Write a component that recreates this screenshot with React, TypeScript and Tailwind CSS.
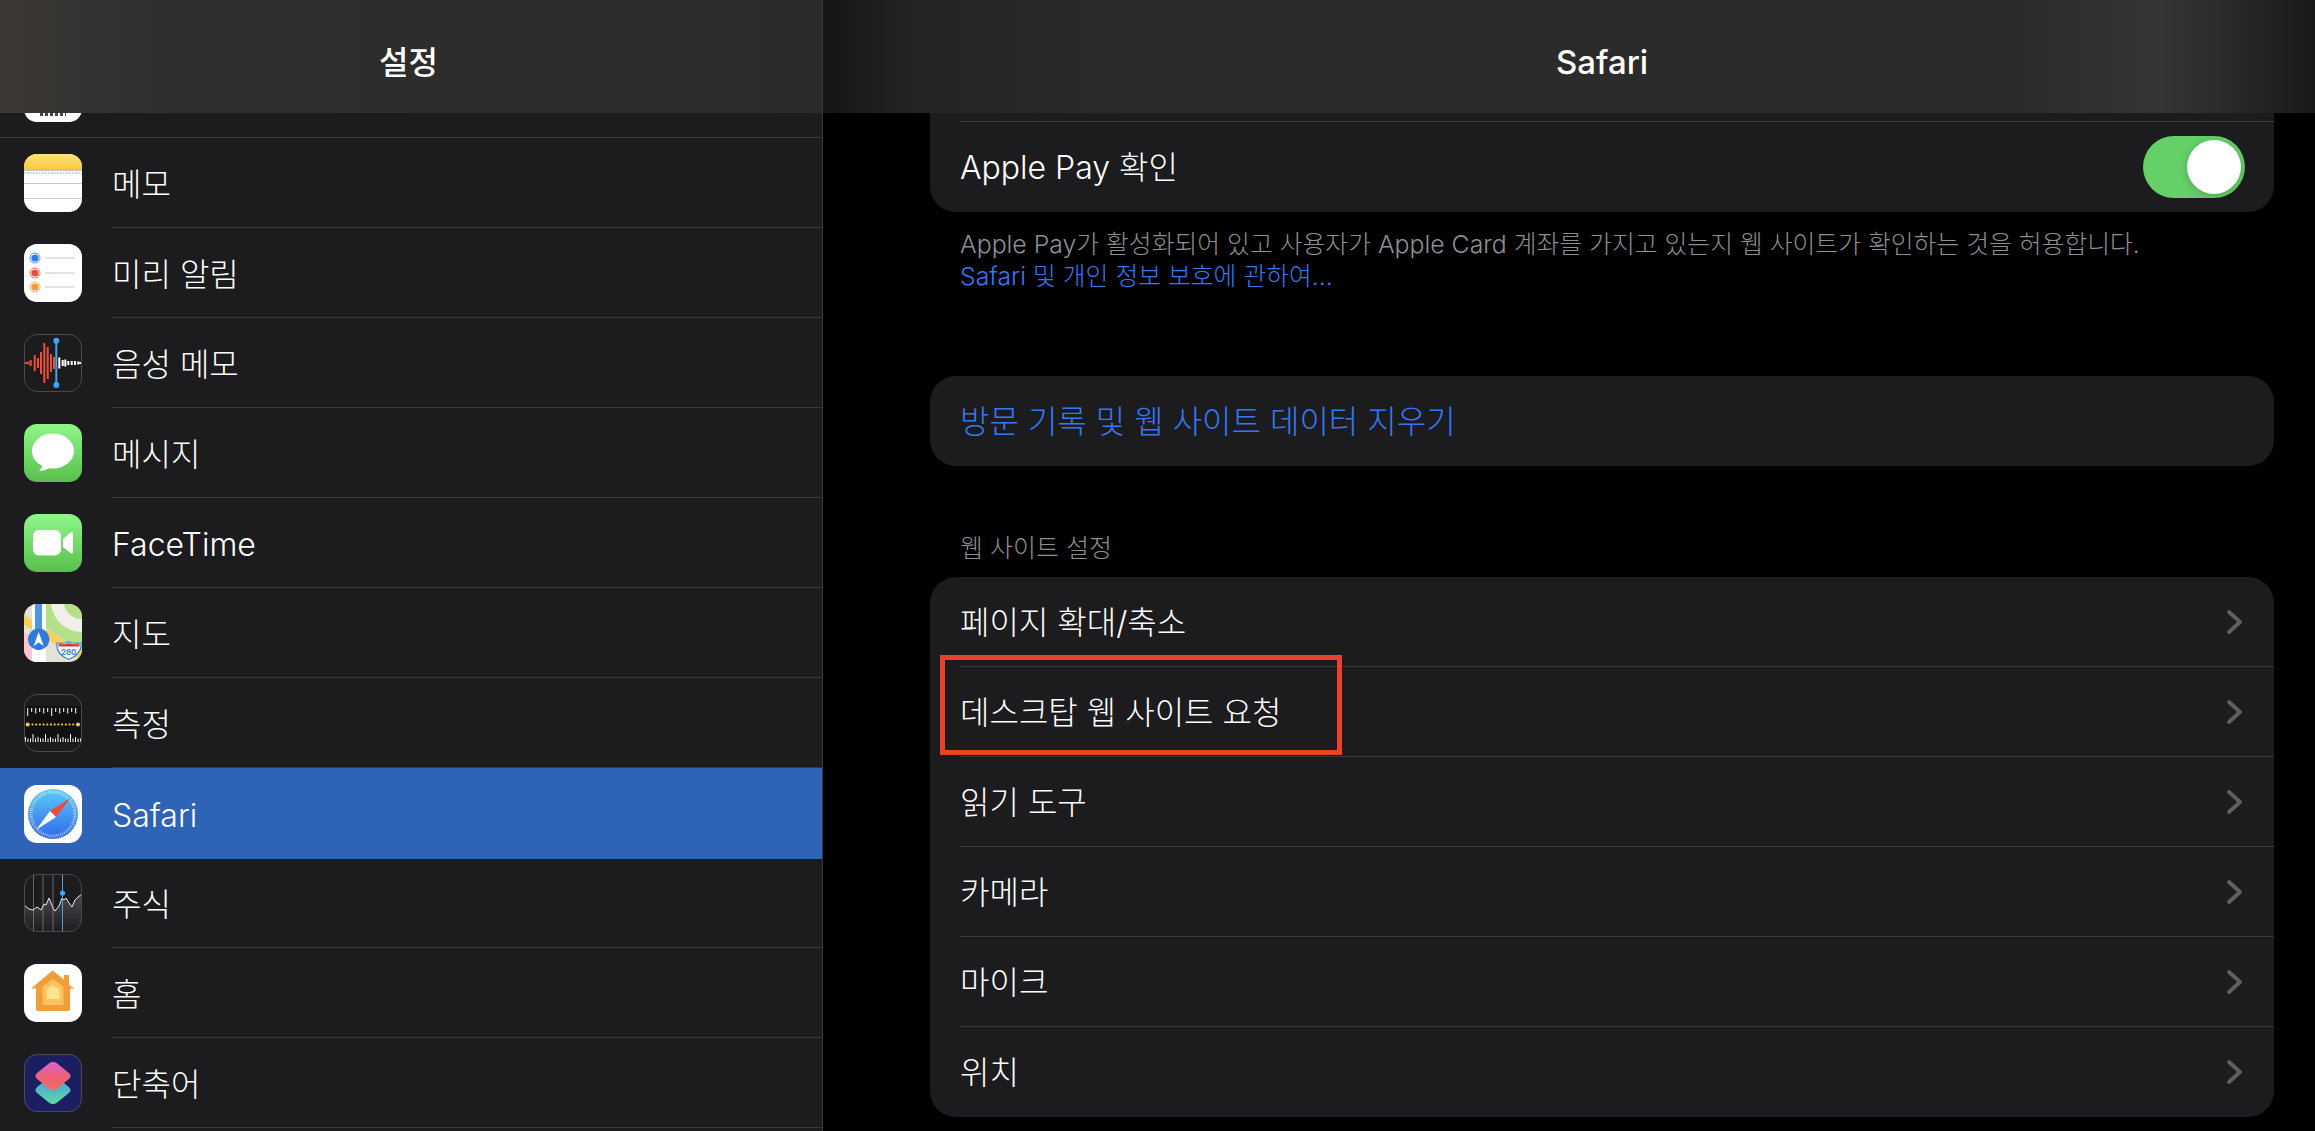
const Notes = () => (
    <svg viewBox="0 0 58 58" className="w-full h-full">
        <defs>
            <linearGradient id="notesTop" x1="0" y1="0" x2="0" y2="1">
                <stop offset="0" stopColor="#fbe17a" />
                <stop offset="1" stopColor="#f6cb3f" />
            </linearGradient>
        </defs>
        <rect width="58" height="58" fill="#fff" />
        <rect width="58" height="15" fill="url(#notesTop)" />
        <rect y="15" width="58" height="2" fill="#c4c4c4" />
        <line x1="0" y1="19" x2="58" y2="19" stroke="#c9c9c9" strokeWidth="2" strokeDasharray="1.5 1.5" />
        <rect y="29" width="58" height="1" fill="#c8c8c8" />
        <rect y="44" width="58" height="1" fill="#c8c8c8" />
    </svg>
)

const Reminders = () => (
    <svg viewBox="0 0 58 58" className="w-full h-full">
        <rect width="58" height="58" fill="#fff" />
        {[[14, '#3478f6'], [29, '#ea4d3d'], [43, '#f19a37']].map(([y, c]) => (
            <g key={y as number}>
                <circle cx="11" cy={y as number} r="5" fill="none" stroke={c as string} strokeWidth="0.8" />
                <circle cx="11" cy={y as number} r="3.6" fill={c as string} />
                <line x1="21" x2="51" y1={y as number} y2={y as number} stroke="#c8c8c8" />
            </g>
        ))}
    </svg>
)

const voiceRed = [[2, 1], [4.3, 1.5], [6.7, 3], [10.7, 8], [14, 5], [17, 11], [20.3, 20], [23.7, 16], [27, 9], [30, 6]]
const voiceWhite = [[35.3, 5.5], [38.7, 3], [41.3, 3.5], [44.3, 2], [47.7, 2], [51, 2], [54.3, 1.5], [56.3, 1]]
const VoiceMemos = () => (
    <svg viewBox="0 0 58 58" className="w-full h-full">
        <rect width="58" height="58" fill="#1c1c1e" />
        {voiceRed.map(([x, h]) => (
            <rect key={x} x={x - 1} y={29 - h} width="2" height={h * 2} fill="#f04e3a" />
        ))}
        {voiceWhite.map(([x, h]) => (
            <rect key={x} x={x - 1} y={29 - h} width="2" height={h * 2} fill="#fff" />
        ))}
        <line x1="32.300" x2="32.300" y1="6" y2="52" stroke="#3ea4f4" strokeWidth="2" />
        <circle cx="32.300" cy="6.700" r="3" fill="#3ea4f4" />
        <circle cx="32.300" cy="51" r="3" fill="#3ea4f4" />
    </svg>
)

const Messages = () => (
    <svg viewBox="0 0 58 58" className="w-full h-full">
        <defs>
            <linearGradient id="greenA" x1="0" y1="0" x2="0" y2="1">
                <stop offset="0" stopColor="#8ff788" />
                <stop offset="1" stopColor="#58bf4c" />
            </linearGradient>
        </defs>
        <rect width="58" height="58" fill="url(#greenA)" />
        <ellipse cx="29" cy="27" rx="21" ry="17.5" fill="#fff" />
        <path d="M19 38 C19 42 17 45 15 47 C20 47 24 45 27 43 Z" fill="#fff" />
    </svg>
)

const FaceTime = () => (
    <svg viewBox="0 0 58 58" className="w-full h-full">
        <defs>
            <linearGradient id="greenB" x1="0" y1="0" x2="0" y2="1">
                <stop offset="0" stopColor="#8ff788" />
                <stop offset="1" stopColor="#58bf4c" />
            </linearGradient>
        </defs>
        <rect width="58" height="58" fill="url(#greenB)" />
        <rect x="9" y="16" width="28" height="25.5" rx="6" fill="#fff" />
        <path d="M39 25 L46.500 18.500 Q49 17 49 20 V37.500 Q49 40.500 46.500 39 L39 33 Z" fill="#fff" />
    </svg>
)

const Maps = () => (
    <svg viewBox="0 0 58 58" className="w-full h-full">
        <rect width="58" height="58" fill="#e4e2d8" />
        <path d="M22 0 H58 V47 L22 24 Z" fill="#b5e08a" />
        <path d="M27 0 A31 31 0 0 0 58 28 V15 A18 18 0 0 1 40 0 Z" fill="#f1efe9" />
        <path d="M0 28 L8 33 V58 H0 Z" fill="#f6c5d0" />
        <path d="M0 11 L58 47 V57 L0 21 Z" fill="#f7cf5e" />
        <rect x="8" y="0" width="14" height="58" fill="#fff" />
        <rect x="11" y="0" width="7" height="34" fill="#4e97e0" />
        <circle cx="14.700" cy="35.300" r="10.700" fill="#2f7bdc" />
        <path d="M14.700 28 L19.700 42 L14.700 38.500 L9.700 42 Z" fill="#fff" />
        <path d="M33 39 Q38 40 44.700 37.700 Q51 40 57 39 C58 47 53 52 44.700 55.500 C36 52 32 47 33 39 Z" fill="#fff" stroke="#3f86d9" strokeWidth="1.200" />
        <path d="M34.500 40 Q39 41 44.700 39 Q50 41 55.500 40 L55.500 42.500 H34.500 Z" fill="#cf3b33" />
        <text x="44.700" y="50.500" textAnchor="middle" fontSize="8" fontWeight="700" fill="#3f86d9" fontFamily="Inter, sans-serif">280</text>
    </svg>
)

const measureTop = [8, 4, 5.500, 4, 5.500, 4, 8, 4, 5.500, 4, 5.500, 4, 5.500]
const Measure = () => (
    <svg viewBox="0 0 58 58" className="w-full h-full">
        <rect width="58" height="58" fill="#1c1c1e" />
        <rect y="12" width="58" height="36" fill="#111" />
        {measureTop.map((h, i) => (
            <rect key={i} x={3.200 + i * 4} y="14" width="1" height={h} fill="#fff" />
        ))}
        {Array.from({ length: 23 }).map((_, i) => (
            <rect key={i} x={1 + i * 2.5} y={i % 5 === 3 ? 40 : i % 5 === 0 ? 43 : 44.500} width="1" height={i % 5 === 3 ? 8 : i % 5 === 0 ? 5 : 3.500} fill="#fff" />
        ))}
        {Array.from({ length: 12 }).map((_, i) => (
            <rect key={i} x={7.500 + i * 3.700} y="29.500" width="2" height="2" rx="0.800" fill="#f7cc46" />
        ))}
        <circle cx="3.700" cy="30.500" r="2" fill="#f7cc46" />
        <circle cx="54" cy="30.500" r="2" fill="#f7cc46" />
    </svg>
)

const Safari = () => (
    <svg viewBox="0 0 58 58" className="w-full h-full">
        <defs>
            <linearGradient id="safariBlue" x1="0" y1="0" x2="0" y2="1">
                <stop offset="0" stopColor="#5ccbfa" />
                <stop offset="1" stopColor="#3068e8" />
            </linearGradient>
        </defs>
        <rect width="58" height="58" fill="#fff" />
        <circle cx="29" cy="29" r="25" fill="url(#safariBlue)" />
        <circle cx="29" cy="29" r="22" fill="none" stroke="#fff" strokeOpacity="0.75" strokeWidth="3" strokeDasharray="0.7 1.3" />
        <path d="M46.500 13 L26 26 L32 32 Z" fill="#ee4b36" />
        <path d="M12 45 L26 26 L32 32 Z" fill="#fff" />
    </svg>
)

const Stocks = () => (
    <svg viewBox="0 0 58 58" className="w-full h-full">
        <defs>
            <linearGradient id="stockFill" x1="0" y1="0" x2="0" y2="1">
                <stop offset="0" stopColor="#4a4a4c" />
                <stop offset="1" stopColor="#1c1c1e" />
            </linearGradient>
        </defs>
        <rect width="58" height="58" fill="#1c1c1e" />
        <path d="M0 31 L5 35 L9 36 L13 33 L17 36 L20 30 L22 31 L25 24 L29 34 L31 37 L35 32 L38 24 L40 26 L42 24 L45 29 L48 33 L51 26 L54 23 L58 20 L58 58 L0 58 Z" fill="url(#stockFill)" />
        {[9.500, 19, 29].map((x) => (
            <line key={x} x1={x} x2={x} y1="0" y2="58" stroke="#8a8a8c" strokeWidth="0.7" />
        ))}
        <path d="M0 31 L5 35 L9 36 L13 33 L17 36 L20 30 L22 31 L25 24 L29 34 L31 37 L35 32 L38 24 L40 26 L42 24 L45 29 L48 33 L51 26 L54 23 L58 20" fill="none" stroke="#e8e8e8" strokeWidth="1" />
        <line x1="38.500" x2="38.500" y1="0" y2="58" stroke="#3ea4f4" strokeWidth="1" />
        <circle cx="38.500" cy="19" r="2.600" fill="#3ea4f4" />
    </svg>
)

const Home = () => (
    <svg viewBox="0 0 58 58" className="w-full h-full">
        <rect width="58" height="58" fill="#fff" />
        <path d="M40 11 H45 V21 L51 24.500 H46 V45 Q46 47 44 47 H14 Q12 47 12 45 V24.500 H7 L28.700 6.500 L40 15.500 Z" fill="#f19d38" />
        <path d="M28.700 15 L39.500 22.500 V41 H18.500 V22.500 Z" fill="#fbc25f" />
        <path d="M28.700 21 L35.500 25.500 V35 H22.500 V25.500 Z" fill="#fde58e" />
    </svg>
)

const Shortcuts = () => (
    <svg viewBox="0 0 58 58" className="w-full h-full">
        <defs>
            <linearGradient id="shortA" x1="0" y1="0" x2="1" y2="1">
                <stop offset="0" stopColor="#d766d8" />
                <stop offset="0.55" stopColor="#ee6072" />
                <stop offset="1" stopColor="#f0705a" />
            </linearGradient>
            <linearGradient id="shortB" x1="0" y1="0" x2="1" y2="1">
                <stop offset="0" stopColor="#4a8fe8" />
                <stop offset="1" stopColor="#5ee0a0" />
            </linearGradient>
        </defs>
        <rect width="58" height="58" fill="#1b1f61" />
        <g transform="translate(29 36) scale(1 0.8) rotate(45)">
            <rect x="-14" y="-14" width="28" height="28" rx="5.500" fill="url(#shortB)" />
        </g>
        <g transform="translate(29 22) scale(1 0.8) rotate(45)">
            <rect x="-14" y="-14" width="28" height="28" rx="5.500" fill="url(#shortA)" />
        </g>
    </svg>
)

const Calendar = () => (
    <div className="w-[58px] h-[58px] -mt-[49px] ml-6 rounded-[13px] bg-white shrink-0 flex items-end justify-center pb-[6px]">
        <div className="w-[26px] h-[3px] bg-[repeating-linear-gradient(90deg,#444_0,#444_3px,#fff_3px,#fff_5px)]" />
    </div>
)

const rows = [
    { label: '메모', icon: <Notes />, ring: false },
    { label: '미리 알림', icon: <Reminders />, ring: false },
    { label: '음성 메모', icon: <VoiceMemos />, ring: true },
    { label: '메시지', icon: <Messages />, ring: false },
    { label: 'FaceTime', icon: <FaceTime />, ring: false },
    { label: '지도', icon: <Maps />, ring: false },
    { label: '측정', icon: <Measure />, ring: true },
    { label: 'Safari', icon: <Safari />, ring: false, active: true },
    { label: '주식', icon: <Stocks />, ring: true },
    { label: '홈', icon: <Home />, ring: false },
    { label: '단축어', icon: <Shortcuts />, ring: true },
]

const settings = ['페이지 확대/축소', '데스크탑 웹 사이트 요청', '읽기 도구', '카메라', '마이크', '위치']

const Chevron = () => (
    <svg viewBox="0 0 18 28" className="w-[18px] h-[28px] -mt-[2px] shrink-0" fill="none" stroke="#5f5f63" strokeWidth="4" strokeLinecap="round" strokeLinejoin="round">
        <path d="M4 4 L15 14 L4 24" />
    </svg>
)

export default function App() {
    return (
        <div className="flex w-[2315px] h-[1131px] overflow-hidden bg-black text-white font-['Inter','Noto_Sans_CJK_KR',sans-serif]">
            <aside className="w-[823px] shrink-0 h-full flex flex-col bg-[#1c1c1e] border-r border-[#38383a] overflow-hidden">
                <header className="h-[113px] shrink-0 flex items-center justify-center pt-[12px] pr-[5px] text-[32px] font-medium bg-[linear-gradient(90deg,#3b3835_0,#2f2e2d_180px,#2b2b2b_100%)] relative z-10">
                    설정
                </header>
                <div className="h-[25px] shrink-0 border-b border-[#38383a] overflow-hidden flex">
                    <Calendar />
                </div>
                {rows.map((row) => (
                    <div key={row.label} className={row.active ? 'h-[91px] -mb-px shrink-0 flex items-center pl-6 bg-[#2f63b5] relative' : 'h-[90px] shrink-0 flex items-center pl-6'}>
                        <div className={row.ring ? 'w-[58px] h-[58px] shrink-0 rounded-[13px] overflow-hidden outline outline-1 -outline-offset-1 outline-[#4a4a4c]' : 'w-[58px] h-[58px] shrink-0 rounded-[13px] overflow-hidden'}>
                            {row.icon}
                        </div>
                        <div className={row.active ? 'flex-1 h-full ml-[30px] pt-[4px] flex items-center text-[32px] font-light' : 'flex-1 h-full ml-[30px] pt-[4px] flex items-center text-[32px] font-light border-b border-[#38383a]'}>
                            {row.label}
                        </div>
                    </div>
                ))}
            </aside>

            <main className="flex-1 min-w-0 h-full flex flex-col">
                <header className="h-[113px] shrink-0 flex items-center justify-center pt-[12px] pl-[66px] text-[33px] font-medium bg-[linear-gradient(90deg,#151515_0,#242424_90px,#2b2b2b_300px,#2b2b2b_1200px,#353535_1330px,#2e2e2e_1380px,#191919_1492px)]">
                    Safari
                </header>
                <div className="flex-1 pl-[107px] pr-[41px]">
                    <section className="bg-[#1c1c1e] rounded-b-[26px]">
                        <div className="h-2" />
                        <div className="ml-[30px] h-[91px] pt-[2px] flex items-center justify-between border-t border-[#38383a] pr-[29px]">
                            <span className="text-[32px] font-light">Apple Pay 확인</span>
                            <div className="w-[102px] h-[62px] -mt-[2px] rounded-full bg-[#65cf68] flex items-center justify-end pr-1">
                                <div className="w-[54px] h-[54px] rounded-full bg-white shadow-[0_2px_8px_rgba(0,0,0,0.2)]" />
                            </div>
                        </div>
                    </section>
                    <div className="pl-[30px] pt-[16px] text-[24.8px] leading-[32px] font-light text-[#8e8e93]">
                        <p>Apple Pay가 활성화되어 있고 사용자가 Apple Card 계좌를 가지고 있는지 웹 사이트가 확인하는 것을 허용합니다.</p>
                        <p className="text-[#3478f6]">Safari 및 개인 정보 보호에 관하여...</p>
                    </div>
                    <div className="mt-[84px] h-[90px] pt-[2px] rounded-[26px] bg-[#1c1c1e] flex items-center pl-[30px] text-[32px] font-light text-[#3478f6]">
                        방문 기록 및 웹 사이트 데이터 지우기
                    </div>
                    <h2 className="mt-[64px] pl-[30px] text-[25px] leading-[36px] font-light text-[#8e8e93]">웹 사이트 설정</h2>
                    <section className="mt-[11px] rounded-[26px] bg-[#1c1c1e]">
                        {settings.map((label, i) => (
                            <div key={label} className="relative ml-[30px] h-[90px] pt-[2px] flex items-center justify-between pr-[31px] border-b border-[#38383a] last:border-b-0 text-[32px] font-light">
                                <span>{label}</span>
                                <Chevron />
                                {i === 1 && (
                                    <div className="absolute left-[-20px] top-[-12px] w-[402px] h-[100px] border-[5px] border-[#e8432a]" />
                                )}
                            </div>
                        ))}
                    </section>
                </div>
            </main>
        </div>
    )
}
